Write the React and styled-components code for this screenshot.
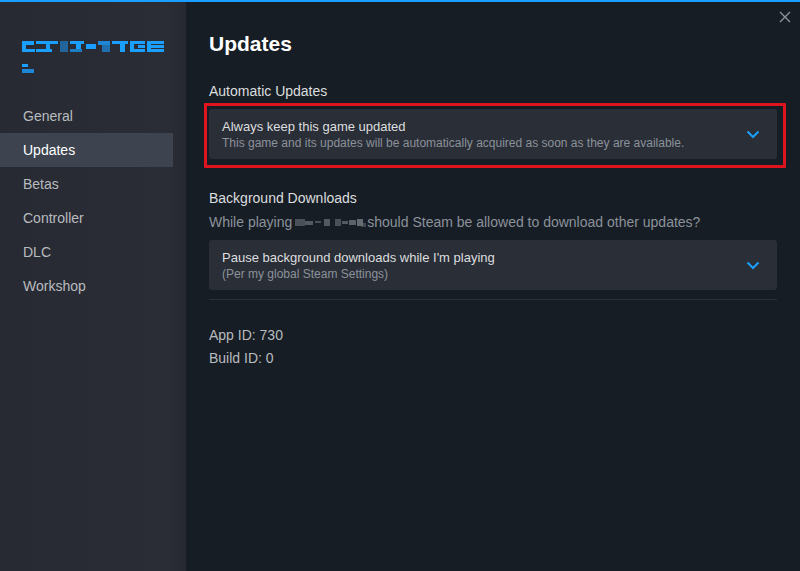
import React from 'react';
import styled, { createGlobalStyle } from 'styled-components';

const GlobalStyle = createGlobalStyle`
  html, body {
    margin: 0;
    padding: 0;
    background: #171d25;
  }
  body {
    font-family: "Liberation Sans", Arial, sans-serif;
  }
`;

const Window = styled.div`
  width: 800px;
  height: 571px;
  display: flex;
  background: #171d25;
  border-top: 2px solid #1a9fff;
  box-sizing: border-box;
  position: relative;
  overflow: hidden;
`;

const Sidebar = styled.nav`
  width: 186px;
  flex-shrink: 0;
  background: linear-gradient(90deg, #272a33 0%, #2a2d36 90%, #262931 100%);
  display: flex;
  flex-direction: column;
  padding-top: 33px;
  box-sizing: border-box;
`;

const Logo = styled.div`
  padding-left: 22px;
  height: 64px;
`;

const NavList = styled.div`
  display: flex;
  flex-direction: column;
`;

const NavItem = styled.div`
  width: 173px;
  height: 34px;
  display: flex;
  align-items: center;
  padding-left: 23px;
  box-sizing: border-box;
  font-size: 14px;
  color: ${p => (p.$active ? '#ffffff' : '#b8bcbf')};
  background: ${p => (p.$active ? '#3d4450' : 'transparent')};
`;

const Main = styled.main`
  flex: 1;
  padding: 30px 23px 0 23px;
  display: flex;
  flex-direction: column;
`;

const Title = styled.h1`
  margin: 0 0 26px 0;
  font-size: 21px;
  font-weight: bold;
  color: #ffffff;
  line-height: 24px;
`;

const SectionLabel = styled.div`
  font-size: 14px;
  color: #dcdedf;
  line-height: 18px;
  margin-bottom: ${p => p.$gap ?? 10}px;
`;

const Hint = styled.div`
  font-size: 14px;
  color: #8b929a;
  line-height: 18px;
  margin: -4px 0 9px 0;
  display: flex;
  align-items: center;
`;

const Highlight = styled.div`
  margin: 0 -9px 0 -5px;
  padding: 3px 6px 6px 2px;
  border: 3px solid #e0141e;
  border-radius: 1px;
`;

const Dropdown = styled.div`
  height: 50px;
  background: #2a2e37;
  border-radius: 3px;
  display: flex;
  align-items: center;
  justify-content: space-between;
  padding: 0 17px 0 13px;
  box-sizing: border-box;
`;

const DropText = styled.div`
  display: flex;
  flex-direction: column;
  padding-top: 2px;
`;

const DropTitle = styled.div`
  font-size: 13px;
  color: #dcdedf;
  line-height: 17px;
`;

const DropSub = styled.div`
  font-size: 12px;
  color: #8b929a;
  line-height: 17px;
`;

const Separator = styled.div`
  height: 1px;
  background: #2a3039;
  margin: ${p => p.$top || 8}px 0 0 0;
`;

const Section = styled.section`
  display: flex;
  flex-direction: column;
  margin-top: ${p => p.$top || 0}px;
`;

const Info = styled.div`
  font-size: 14px;
  color: #b8bcbf;
  line-height: 23px;
`;

const InfoBlock = styled.div`
  margin-top: 24px;
`;

const Close = styled.div`
  position: absolute;
  top: 8px;
  right: 8px;
  width: 14px;
  height: 14px;
  display: flex;
  align-items: center;
  justify-content: center;
`;

const Chevron = () => (
  <svg width="14" height="9" viewBox="0 0 14 9">
    <path d="M1.5 1.5 L7 7 L12.5 1.5" fill="none" stroke="#1a9fff" strokeWidth="2" />
  </svg>
);

const LogoMark = () => (
  <svg width="145" height="45" viewBox="0 0 145 45">
    <g fill="#1a9fff">
      <rect x="0" y="6" width="12" height="4" />
      <rect x="0" y="10" width="4" height="4" />
      <rect x="0" y="14" width="13" height="3" />
      <rect x="14" y="6" width="22" height="3" />
      <rect x="24" y="9" width="4" height="5" />
      <rect x="14" y="14" width="16" height="3" />
      <rect x="38" y="6" width="8" height="11" opacity="0.5" />
      <rect x="48" y="6" width="14" height="3" />
      <rect x="54" y="9" width="5" height="5" />
      <rect x="48" y="14" width="12" height="3" opacity="0.7" />
      <rect x="64" y="9" width="10" height="5" />
      <rect x="76" y="6" width="12" height="4" opacity="0.8" />
      <rect x="80" y="10" width="8" height="7" opacity="0.6" />
      <rect x="90" y="6" width="16" height="3" />
      <rect x="98" y="9" width="5" height="8" />
      <rect x="108" y="6" width="15" height="3" />
      <rect x="108" y="9" width="4" height="5" />
      <rect x="108" y="14" width="15" height="3" />
      <rect x="116" y="10" width="7" height="3" />
      <rect x="125" y="6" width="17" height="3" />
      <rect x="125" y="9" width="4" height="5" />
      <rect x="129" y="10" width="13" height="3" />
      <rect x="125" y="14" width="17" height="3" />
      <rect x="0" y="29" width="6" height="3" />
      <rect x="0" y="34" width="12" height="4" opacity="0.8" />
    </g>
  </svg>
);

const Redacted = () => (
  <svg width="72" height="12" viewBox="0 0 72 12" style={{ margin: '0 0 0 3px' }}>
    <g fill="#6d737b">
      <rect x="0" y="3" width="10" height="7" opacity="0.6" />
      <rect x="10" y="5" width="8" height="4" opacity="0.7" />
      <rect x="20" y="5" width="6" height="2" opacity="0.6" />
      <rect x="29" y="3" width="6" height="7" opacity="0.7" />
      <rect x="40" y="3" width="6" height="7" opacity="0.6" />
      <rect x="47" y="5" width="6" height="3" opacity="0.7" />
      <rect x="54" y="4" width="7" height="5" opacity="0.8" />
      <rect x="62" y="3" width="6" height="7" opacity="0.9" />
      <rect x="66" y="7" width="5" height="4" opacity="0.5" />
    </g>
  </svg>
);

const navItems = ['General', 'Updates', 'Betas', 'Controller', 'DLC', 'Workshop'];

export default function App() {
  return (
    <>
      <GlobalStyle />
      <Window>
        <Sidebar>
          <Logo>
            <LogoMark />
          </Logo>
          <NavList>
            {navItems.map(item => (
              <NavItem key={item} $active={item === 'Updates'}>
                {item}
              </NavItem>
            ))}
          </NavList>
        </Sidebar>
        <Main>
          <Title>Updates</Title>
          <Section>
            <SectionLabel $gap={3}>Automatic Updates</SectionLabel>
            <Highlight>
              <Dropdown>
                <DropText>
                  <DropTitle>Always keep this game updated</DropTitle>
                  <DropSub>This game and its updates will be automatically acquired as soon as they are available.</DropSub>
                </DropText>
                <Chevron />
              </Dropdown>
            </Highlight>
          </Section>
          <Section $top={21}>
            <SectionLabel>Background Downloads</SectionLabel>
            <Hint>
              While playing <Redacted />should Steam be allowed to download other updates?
            </Hint>
            <Dropdown>
              <DropText>
                <DropTitle>Pause background downloads while I'm playing</DropTitle>
                <DropSub>(Per my global Steam Settings)</DropSub>
              </DropText>
              <Chevron />
            </Dropdown>
            <Separator $top={9} />
          </Section>
          <InfoBlock>
            <Info>App ID: 730</Info>
            <Info>Build ID: 0</Info>
          </InfoBlock>
        </Main>
        <Close>
          <svg width="12" height="12" viewBox="0 0 12 12">
            <path d="M1 1 L11 11 M11 1 L1 11" stroke="#8b929a" strokeWidth="1.4" />
          </svg>
        </Close>
      </Window>
    </>
  );
}
